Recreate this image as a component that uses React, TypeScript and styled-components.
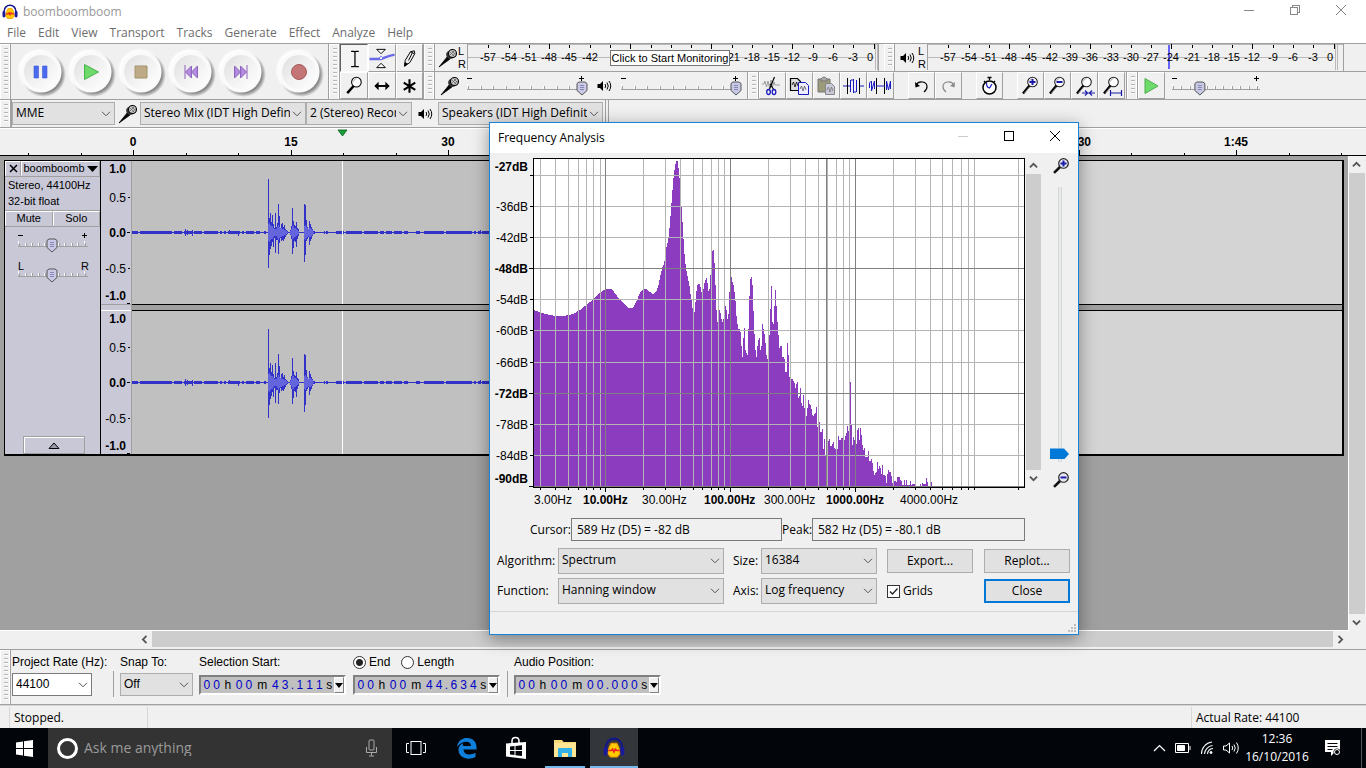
import React from "react";
import styled, { createGlobalStyle, css } from "styled-components";

const ui = `"Open Sans", "Noto Sans", sans-serif`;
const arial = `"Liberation Sans", Arial, sans-serif`;
const face = "#f0f0f0";
const edge = "#a0a0a0";
const panel = "#c8c8d7";

const GlobalStyle = createGlobalStyle`
  *, *::before, *::after { box-sizing: border-box; }
  body { margin: 0; background: ${face}; font: 12px/16px ${ui}; color: #000; }
  button, select, input { font: inherit; color: inherit; margin: 0; }
  svg { display: block; }
`;

/* ---------- shell ---------- */
const Screen = styled.div`
  min-height: 100vh;
  display: flex;
  flex-direction: column;
  position: relative;
  overflow: hidden;
  background: ${face};
`;
const TitleBar = styled.header`
  display: flex;
  align-items: center;
  height: 24px;
  padding: 0 2px;
  background: #fff;
  color: #999;
`;
const TitleText = styled.span<{ $inset?: boolean }>`
  flex: 1;
  padding-left: ${(p) => (p.$inset ? 5 : 0)}px;
`;
const WindowButton = styled.button`
  width: 46px;
  height: 24px;
  padding: 0 0 4px;
  border: 0;
  background: none;
  display: grid;
  place-items: center;
`;
const MenuBar = styled.nav`
  display: flex;
  height: 19px;
  padding: 0 0 2px 1px;
  background: #fff;
`;
const MenuItem = styled.button`
  padding: 0 6px;
  border: 0;
  background: none;
  color: #6d6d6d;
  line-height: 16px;
`;

/* ---------- toolbars ---------- */
const Docks = styled.div`
  display: flex;
  height: 57px;
  border-top: 1px solid ${edge};
`;
const DockColumn = styled.div`
  flex: 1;
  display: flex;
  flex-direction: column;
  border-bottom: 1px solid ${edge};
`;
const DockRow = styled.div`
  display: flex;
  height: 27px;
  & + & { height: 28px; border-top: 1px solid ${edge}; }
`;
const Dock = styled.div<{ $w?: number; $bottom?: boolean }>`
  display: flex;
  flex: none;
  align-self: stretch;
  position: relative;
  border-right: 1px solid ${edge};
  ${(p) => p.$w && css`width: ${p.$w}px;`}
  ${(p) => p.$bottom && css`border-bottom: 1px solid ${edge};`}
`;
const Gripper = styled.div`
  flex: none;
  width: 11px;
  border-right: 1px solid ${edge};
  box-shadow: inset 1px 1px #fff, inset -1px 0 #fff;
  background: repeating-linear-gradient(#b4b4b4 0 1px, #fff 1px 2px, ${face} 2px 4px) 4px 4px / 4px calc(100% - 8px) no-repeat;
`;
const TransportButtons = styled.div`
  display: flex;
  align-items: center;
  padding: 0 5px;
`;
const RoundButton = styled.button<{ $apart?: boolean }>`
  width: 50px;
  height: 50px;
  padding: 0;
  border: 0;
  background: none;
  margin-left: ${(p) => (p.$apart ? 8 : 0)}px;
`;
const ToolGrid = styled.div`
  display: grid;
  grid-template-columns: 28px 28px 27px;
  grid-template-rows: 28px 27px;
`;
const SquareButton = styled.button<{ $down?: boolean; $cell?: boolean }>`
  width: ${(p) => (p.$cell ? "auto" : "27px")};
  min-width: 0;
  min-height: 0;
  padding: 0;
  border: 1px solid;
  border-color: ${(p) => (p.$down ? "#606060 #fff #fff #606060" : `#fff ${edge} ${edge} #fff`)};
  background: ${(p) => (p.$down ? "#f4f4f4" : face)};
  display: flex;
  align-items: center;
  justify-content: center;
  overflow: hidden;
`;
const ToolSpace = styled.div<{ $w: number }>`flex: none; width: ${(p) => p.$w}px;`;
const MeterIcon = styled.button`
  width: 23px;
  padding: 0 0 0 2px;
  border: 0;
  background: none;
  display: grid;
  place-items: center;
`;
const Channels = styled.div`
  width: 9px;
  display: flex;
  flex-direction: column;
  justify-content: space-around;
  font: 11px/12px ${arial};
`;
const MeterScale = styled.svg`
  flex: 1;
  height: 26px;
  border-left: 1px solid ${edge};
  font: 11px ${arial};
`;
const Tooltip = styled.div`
  position: absolute;
  left: 186px;
  top: 6px;
  width: 120px;
  height: 16px;
  border: 1px solid #767676;
  background: #fff;
  font: 11px/14px ${arial};
  text-align: center;
  white-space: nowrap;
`;
const MixerIcon = styled.div<{ $w: number }>`
  flex: none;
  width: ${(p) => p.$w}px;
  display: grid;
  place-items: center;
`;
const DeviceBar = styled.div`
  display: flex;
  align-items: center;
  height: 28px;
  border-bottom: 1px solid ${edge};
`;
const DeviceEnd = styled.div`
  width: 4px;
  align-self: stretch;
  margin-left: 2px;
  border: solid ${edge};
  border-width: 0 1px;
`;

/* ---------- form controls ---------- */
const SelectBox = styled.span<{ $w: number; $h: number; $white?: boolean }>`
  position: relative;
  flex: none;
  display: block;
  width: ${(p) => p.$w}px;
  height: ${(p) => p.$h}px;
  select {
    appearance: none;
    display: block;
    width: 100%;
    height: 100%;
    padding: 0 15px 2px 3px;
    border: 1px solid ${(p) => (p.$white ? "#7a7a7a" : "#adadad")};
    border-radius: 0;
    background: ${(p) => (p.$white ? "#fff" : "#e1e1e1")};
    overflow: hidden;
    white-space: nowrap;
  }
  svg {
    position: absolute;
    right: 4px;
    top: 50%;
    margin-top: -3px;
    pointer-events: none;
  }
`;
const SliderBox = styled.span`
  position: relative;
  display: block;
  flex: none;
  input { position: absolute; inset: 0; width: 100%; height: 100%; opacity: 0; }
  svg { font: 11px ${arial}; }
`;

/* ---------- ruler and tracks ---------- */
const Ruler = styled.svg`
  width: 100%;
  height: 28px;
  border-top: 1px solid #fff;
  border-bottom: 1px solid #000;
  font: bold 12px ${arial};
`;
const Workspace = styled.main`
  flex: 1;
  display: flex;
  min-height: 0;
`;
const TrackArea = styled.div`
  flex: 1;
  min-width: 0;
  padding: 4px;
  background: ${edge};
  border-bottom: 1px solid #fff;
`;
const Track = styled.section`
  display: flex;
  border: 1px solid #000;
  border-width: 1px 2px 2px 1px;
`;
const TrackPanel = styled.div`
  width: 96px;
  display: flex;
  flex-direction: column;
  background: ${panel};
  border-right: 1px solid #000;
  font: 11px/16px ${arial};
`;
const PanelRow = styled.div`
  display: flex;
  border-bottom: 1px solid ${edge};
`;
const PanelButton = styled.button<{ $fill?: boolean }>`
  height: 15px;
  padding: 0 1px;
  ${(p) => (p.$fill ? css`flex: 1; min-width: 0;` : css`width: 16px;`)}
  display: flex;
  align-items: center;
  justify-content: center;
  gap: 2px;
  border: 1px solid;
  border-color: #fff ${edge} ${panel} #fff;
  background: ${panel};
  line-height: 13px;
  white-space: nowrap;
  svg { flex: none; }
`;
const TrackInfo = styled.div`
  height: 34px;
  padding: 0 3px;
  border-bottom: 1px solid ${edge};
`;
const PanelSliders = styled.div`
  display: flex;
  flex-direction: column;
  align-items: center;
  gap: 4px;
  padding: 2px 0 0 2px;
`;
const CollapseButton = styled.button`
  width: 62px;
  height: 18px;
  margin: auto auto 0 18px;
  padding: 0;
  display: grid;
  place-items: center;
  border: 1px solid ${edge};
  box-shadow: inset 1px 1px #fff;
  background: ${panel};
`;
const ScaleColumn = styled.div`
  width: 31px;
  display: flex;
  flex-direction: column;
  background: ${panel};
  border-right: 1px solid ${edge};
`;
const ScaleSvg = styled.svg`
  width: 30px;
  height: 143px;
  font: 12px ${arial};
`;
const ScaleGap = styled.div`
  height: 7px;
  border-top: 1px solid ${edge};
  border-bottom: 1px solid #fff;
`;
const WaveColumn = styled.div`flex: 1; min-width: 0;`;
const WaveSvg = styled.svg`width: 100%; height: 143px; background: #d4d4d4;`;
const WaveGap = styled.div`
  height: 7px;
  background: ${edge};
  border: solid #000;
  border-width: 1px 0;
`;
const VScroll = styled.div`
  width: 18px;
  padding-right: 1px;
  display: flex;
  flex-direction: column;
  border-left: 1px solid #fff;
`;
const ScrollThumb = styled.div`flex: 1; background: #cdcdcd;`;
const ScrollButton = styled.button<{ $size: number }>`
  flex: none;
  width: 15px;
  height: ${(p) => p.$size}px;
  padding: 0;
  border: 0;
  background: none;
  display: grid;
  place-items: center;
`;
const HScroll = styled.div`
  display: flex;
  height: 18px;
  padding: 0 18px 2px 137px;
`;

/* ---------- selection bar, status bar ---------- */
const SelectionBar = styled.div`
  display: flex;
  height: 56px;
  border-top: 1px solid ${edge};
  border-bottom: 1px solid ${edge};
`;
const Field = styled.div<{ $w: number }>`
  flex: none;
  width: ${(p) => p.$w}px;
  padding-top: 4px;
  font: 12px/16px ${arial};
  white-space: nowrap;
`;
const FieldHead = styled.div`
  display: flex;
  align-items: center;
  height: 16px;
  margin-bottom: 3px;
`;
const Divider = styled.div`
  width: 1px;
  height: 26px;
  margin: 21px 6px 0 0;
  background: ${edge};
`;
const Radio = styled.input`
  appearance: none;
  width: 13px;
  height: 13px;
  margin: 0 3px 0 0;
  border: 1px solid #333;
  border-radius: 50%;
  background: #fff;
  &:checked { background: radial-gradient(circle, #222 0 3px, #fff 4px); }
`;
const RadioLabel = styled.label`
  display: flex;
  align-items: center;
  margin-right: 11px;
`;
const TimeBox = styled.div`
  display: flex;
  width: 147px;
  height: 20px;
  margin-top: 5px;
  padding-left: 1px;
  border: 2px solid;
  border-color: #808080 #fff #fff #808080;
  background: #c0c0c0;
  line-height: 16px;
`;
const TimeCell = styled.span<{ $w: number; $unit?: boolean }>`
  width: ${(p) => p.$w}px;
  text-align: center;
  color: ${(p) => (p.$unit ? "#000" : "#0000c8")};
`;
const TimeDrop = styled.button`
  width: 10px;
  margin-left: auto;
  padding: 0;
  display: grid;
  place-items: center;
  border: 1px solid;
  border-color: #fff #808080 #808080 #fff;
  background: ${face};
`;
const StatusBar = styled.footer`
  display: flex;
  height: 23px;
  padding-left: 9px;
  border-top: 1px solid #d7d7d7;
`;
const StatusCell = styled.div<{ $w?: number }>`
  ${(p) => (p.$w ? css`width: ${p.$w}px;` : css`flex: 1;`)}
  margin-top: 1px;
  padding: 3px 0 0 4px;
  border-left: 1px solid #d7d7d7;
`;

/* ---------- taskbar ---------- */
const Taskbar = styled.div`
  display: flex;
  height: 40px;
  background: #02060b;
  color: #fff;
`;
const TaskButton = styled.button<{ $w: number; $run?: boolean; $on?: boolean }>`
  flex: none;
  width: ${(p) => p.$w}px;
  padding: 0;
  border: 0;
  display: grid;
  place-items: center;
  background: ${(p) => (p.$on ? "#33373c" : "none")};
  color: #fff;
  ${(p) => p.$run && css`box-shadow: inset 0 -2px #76b9ed;`}
`;
const SearchBox = styled.label`
  flex: none;
  width: 344px;
  display: flex;
  align-items: center;
  gap: 5px;
  padding: 0 14px 0 8px;
  background: #333;
`;
const SearchInput = styled.input`
  flex: 1;
  min-width: 0;
  padding: 0;
  border: 0;
  background: none;
  font-size: 14px;
  &::placeholder { color: #9a9a9a; opacity: 1; }
`;
const Tray = styled.div`
  display: flex;
  align-items: center;
  margin-left: auto;
`;
const TrayButton = styled.button<{ $w: number }>`
  width: ${(p) => p.$w}px;
  height: 40px;
  padding: 0;
  border: 0;
  display: grid;
  place-items: center;
  background: none;
  color: #fff;
`;
const NotifyButton = styled(TrayButton)`padding-right: 6px;`;
const Clock = styled.div`
  width: 68px;
  text-align: center;
  line-height: 18px;
`;
const ShowDesktop = styled.div`
  width: 5px;
  height: 40px;
  border-left: 1px solid #555;
`;

/* ---------- frequency analysis window ---------- */
const Dialog = styled.section`
  position: absolute;
  left: 489px;
  top: 122px;
  width: 590px;
  border: 1px solid #1883d7;
  background: ${face};
  box-shadow: 0 4px 16px rgba(0, 0, 0, 0.4);
`;
const DialogTitle = styled.header`
  display: flex;
  align-items: center;
  height: 30px;
  padding-left: 8px;
  background: #fff;
`;
const PlotRow = styled.div`
  display: flex;
  height: 357px;
`;
const PlotSvg = styled.svg`
  flex: none;
  width: 536px;
  height: 357px;
  font: 12px ${arial};
`;
const PlotScroll = styled.div`
  width: 15px;
  height: 334px;
  padding-top: 4px;
  display: flex;
  flex-direction: column;
`;
const ZoomColumn = styled.div`
  width: 37px;
  height: 336px;
  padding: 4px 0 0 2px;
  display: flex;
  flex-direction: column;
  align-items: center;
`;
const VRange = styled.input`
  appearance: none;
  writing-mode: vertical-lr;
  direction: rtl;
  width: 20px;
  height: 276px;
  margin: 12px 2px 9px 0;
  background: linear-gradient(90deg, #d6d6d6 1px, #e7eaea 1px 3px, #d6d6d6 3px) center / 4px 100% no-repeat;
  &::-webkit-slider-thumb {
    appearance: none;
    width: 19px;
    height: 11px;
    background: #0078d7;
    clip-path: polygon(0 0, 74% 0, 100% 50%, 74% 100%, 0 100%);
  }
`;
const Readouts = styled.div`
  display: flex;
  align-items: center;
  padding: 8px 0 7px 40px;
`;
const ReadLabel = styled.label<{ $w: number }>`
  flex: none;
  width: ${(p) => p.$w}px;
`;
const Readout = styled.input<{ $w: number }>`
  width: ${(p) => p.$w}px;
  height: 23px;
  padding: 0 5px 1px;
  border: 1px solid #7a7a7a;
  background: ${face};
`;
const FormGrid = styled.div`
  display: grid;
  grid-template-columns: 61px 166px 37px 126px 97px 86px;
  row-gap: 4px;
  align-items: center;
  padding: 0 0 7px 7px;
`;
const FormLabel = styled.label<{ $indent?: boolean }>`
  padding-left: ${(p) => (p.$indent ? 9 : 0)}px;
`;
const PushButton = styled.button<{ $primary?: boolean }>`
  width: 86px;
  height: 24px;
  padding: 0;
  border: ${(p) => (p.$primary ? "2px solid #0078d7" : "1px solid #adadad")};
  background: #e1e1e1;
`;
const CheckLabel = styled.label`
  display: flex;
  align-items: center;
  gap: 3px;
  position: relative;
  svg { position: absolute; left: 1px; pointer-events: none; }
`;
const CheckBox = styled.input`
  appearance: none;
  width: 13px;
  height: 13px;
  border: 1px solid #333;
  background: #fff;
`;
const DialogStatus = styled.div`
  display: flex;
  align-items: flex-end;
  justify-content: flex-end;
  height: 23px;
  padding: 0 2px 2px 0;
  border-top: 1px solid #d7d7d7;
`;

/* ---------- icons ---------- */
const Chevron = ({ dir = "down", color = "#555", size = 10, weight = 1 }: { dir?: string; color?: string; size?: number; weight?: number }) => {
  const turn: Record<string, number> = { down: 0, up: 180, left: 90, right: -90 };
  return (
    <svg width={size} height={size === 10 ? 6 : size} viewBox={size === 10 ? "0 0 10 6" : "0 -2 10 10"}>
      <path d="M1 .8 5 4.8 9 .8" fill="none" stroke={color} strokeWidth={weight} transform={`rotate(${turn[dir]} 5 3)`} />
    </svg>
  );
};
const Logo = ({ size = 16 }: { size?: number }) => (
  <svg width={size} height={size} viewBox="0 0 16 16">
    <path d="M2.2 9V7a5.8 5.8 0 0 1 11.6 0v2" fill="none" stroke="#15158a" strokeWidth="1.5" />
    <path d="M4.500 7.500 6 4.500h4l1.500 3 .8 4.500-2 2.500H5.500l-2-2.500z" fill="#fc0" stroke="#f59a00" strokeWidth=".8" />
    <path d="M4 9.800h2l1-1 1 2 1-2 1 1h2" stroke="#e22" strokeWidth="1.200" fill="none" />
    <rect x=".5" y="7" width="2.800" height="6.500" rx="1.400" fill="#1a1a9c" />
    <rect x="12.700" y="7" width="2.800" height="6.500" rx="1.400" fill="#1a1a9c" />
  </svg>
);
const Mic = () => (
  <svg width="20" height="20" viewBox="0 0 20 20">
    <path d="M1 19 9.500 8.500l2.500 2.500z" fill="#000" stroke="#000" strokeWidth=".8" />
    <path d="M8.500 8.500a6 5 0 0 1 3-6l5.500 5.500a6 5 0 0 1-6 3z" fill="#333" />
    <circle cx="14.500" cy="5.500" r="4" fill="#ccc" stroke="#000" strokeWidth="1.100" />
    <path d="m12 4 4 4M13.500 2.500l4 4M12 7l4.500-4.500M14 8.500 17.500 5" stroke="#555" strokeWidth=".7" />
  </svg>
);
const Speaker = ({ color = "#000" }: { color?: string }) => (
  <svg width="15" height="14" viewBox="0 0 15 14">
    <path d="M.5 5v4h2.500L6 12V2L3 5z" fill={color} />
    <path d="M8 5q1.500 2 0 4M10 3.500q2.500 3.500 0 7M12 2q3.500 5 0 10" fill="none" stroke={color} />
  </svg>
);
const TransportGlyph = ({ kind }: { kind: string }) => {
  switch (kind) {
    case "Pause":
      return <path d="M18 19h4.500v12H18zM26.500 19H31v12h-4.500z" fill="#4a6cf0" stroke="#3d58d8" strokeWidth=".6" />;
    case "Play":
      return <path d="M18.500 17.500v15L32.500 25z" fill="#6ddb6a" stroke="#4fae4d" />;
    case "Stop":
      return <path d="M19 19h12v12H19z" fill="#bcab86" stroke="#a3946f" />;
    case "Skip to Start":
      return <path d="M19 18v14M25.500 19v12L19.500 25zM31.500 19v12L25.500 25z" fill="#b18ade" stroke="#8f62bd" />;
    case "Skip to End":
      return <path d="M31 18v14M18.500 19v12l6-6zM24.500 19v12l6-6z" fill="#b18ade" stroke="#8f62bd" />;
    default:
      return <circle cx="25" cy="25" r="7.500" fill="#c47575" stroke="#a55c5c" />;
  }
};
const Round = ({ kind }: { kind: string }) => (
  <RoundButton aria-label={kind} $apart={kind === "Record"}>
    <svg width="50" height="50" viewBox="0 0 50 50">
      <defs>
        <linearGradient id="dome" x1="0" y1="0" x2="1" y2="1">
          <stop offset="0" stopColor="#dedede" />
          <stop offset=".5" stopColor="#f1f1f1" />
          <stop offset="1" stopColor="#fff" />
        </linearGradient>
        <radialGradient id="drop">
          <stop offset=".82" stopColor="#8c8c8c" />
          <stop offset="1" stopColor="#8c8c8c" stopOpacity="0" />
        </radialGradient>
        <radialGradient id="shine">
          <stop offset=".85" stopColor="#fff" />
          <stop offset="1" stopColor="#fff" stopOpacity="0" />
        </radialGradient>
      </defs>
      <circle cx="27.500" cy="27.500" r="22.500" fill="url(#drop)" />
      <circle cx="23.500" cy="23.500" r="22.500" fill="url(#shine)" />
      <circle cx="25" cy="25" r="20.500" fill="#fafafa" />
      <circle cx="25" cy="25" r="17" fill="url(#dome)" />
      <TransportGlyph kind={kind} />
    </svg>
  </RoundButton>
);
const Magnifier = ({ sign }: { sign?: string }) => (
  <svg width="23" height="23" viewBox="0 0 23 23">
    <path d="m4 19.500 6.500-8" stroke="#000" strokeWidth="2.400" />
    <path d="m5.500 19 5-6" stroke="#999" strokeWidth=".8" />
    <circle cx="13.500" cy="8" r="4.800" fill="#fff" stroke="#222" strokeWidth="1.100" />
    <path d="M10.500 7.500a3.500 3.500 0 0 1 3-3" stroke="#aaa" fill="none" />
    {sign === "plus" && <path d="M10.500 8h6M13.500 5v6" stroke="#1a1aa8" strokeWidth="2" />}
    {sign === "minus" && <path d="M10.500 8h6" stroke="#1a1aa8" strokeWidth="2" />}
    {sign === "sel" && <path d="M9 19h13M12 16.500 14.500 19 12 21.500M19 16.500 16.500 19l2.500 2.500" stroke="#1a1aa8" strokeWidth="1.200" fill="none" />}
    {sign === "fit" && <path d="M10.500 19h11M10.500 16v6M21.500 16v6" stroke="#1a1aa8" strokeWidth="1.200" fill="none" />}
  </svg>
);
const SmallLens = ({ sign }: { sign: string }) => (
  <svg width="18" height="18" viewBox="0 0 18 18">
    <path d="m2 16 6-6" stroke="#111" strokeWidth="2.600" />
    <circle cx="11.500" cy="6.500" r="4.800" fill="#e8e8f4" stroke="#222" strokeWidth="1.200" />
    <path d={sign === "plus" ? "M8.500 6.500h6M11.500 3.500v6" : "M8.500 6.500h6"} stroke="#1a1aa8" strokeWidth="2" />
  </svg>
);
const ToolGlyph = ({ kind }: { kind: string }) => {
  const p = { width: 26, height: 25, viewBox: "0 0 26 26", fill: "none", stroke: "#000" };
  switch (kind) {
    case "Selection Tool":
      return <svg {...p}><path d="M10 5.500h3l1 1 1-1h3M14 6v15M10 21.500h3l1-1 1 1h3" strokeWidth="1.300" /></svg>;
    case "Envelope Tool":
      return (
        <svg {...p}>
          <path d="M0 13.500h12l8-3 6-1.500" stroke="#6a6ae6" strokeWidth="2.500" />
          <path d="M7.500 3.500h9L12 8zM7.500 22.500h9L12 18z" fill="#fff" />
          <path d="M12 10.500 14 12.500 12 14.500 10 12.500z" fill="#fff" stroke="#6a6ae6" />
        </svg>
      );
    case "Draw Tool":
      return (
        <svg {...p}>
          <path d="m8 21 .5-6L14 6l4-1 .5 3-5 9z" fill="#eee" />
          <path d="m8 21 .3-3.500 2.500 1z" fill="#000" />
          <path d="m12 15 4-8M14 6l4 2" />
        </svg>
      );
    case "Zoom Tool":
      return (
        <svg {...p}>
          <path d="m6 21 7-8" strokeWidth="2.600" />
          <circle cx="15.500" cy="9.500" r="5" fill="#fff" strokeWidth="1.100" />
          <path d="M12.500 9a3.500 3.500 0 0 1 3-3" stroke="#aaa" />
        </svg>
      );
    case "Time Shift Tool":
      return <svg {...p}><path d="M6 13.500h14" strokeWidth="2" /><path d="m9.500 9-4.500 4.500L9.500 18zM16.500 9l4.500 4.500-4.500 4.500z" fill="#000" stroke="none" /></svg>;
    default:
      return <svg {...p}><path d="M13 6.500v14M7 10l12 7.500M19 10 7 17.500" strokeWidth="2.200" /></svg>;
  }
};
const wavy = "M1 9h2l1-3 1.500 6L7 6l1.500 7L10 5l1.500 7L13 7l1 3h5";
const EditGlyph = ({ kind }: { kind: string }) => {
  const p = { width: 23, height: 22, viewBox: "0 0 23 22", fill: "none", stroke: "#000" };
  switch (kind) {
    case "Cut":
      return (
        <svg {...p}>
          <path d={wavy} stroke="#888" strokeWidth=".8" />
          <path d="M13.500 2 8.500 14M9 9l4 6" strokeWidth="1.200" />
          <g stroke="#1a1ac0" strokeWidth="1.300"><ellipse cx="7.500" cy="17" rx="1.800" ry="2.500" /><ellipse cx="13" cy="17" rx="1.800" ry="2.500" /></g>
        </svg>
      );
    case "Copy":
      return (
        <svg {...p}>
          <path d="M2.500 3.500h7l3 3v9h-10z" fill="#ddd" strokeWidth="1.200" />
          <path d="m4 10 1.500-3L7 12l1.500-5L10 11" strokeWidth=".8" />
          <path d="M10.500 7.500h7l3 3v9h-10z" fill="#eef" stroke="#1a1ac0" />
          <path d="m12 14 1.500-3L15 16l1.500-5 1.500 4" stroke="#555" strokeWidth=".8" />
        </svg>
      );
    case "Paste":
      return (
        <svg {...p}>
          <path d="M3 4h12v13H3z" fill="#9b9b7a" stroke="#777" />
          <path d="M6 4q3-4 6 0v2H6z" fill="#aaa" stroke="#777" />
          <path d="M10.500 8.500h6l3 3v8h-9z" fill="#c8c8d8" stroke="#888" />
          <path d="m12 15 1.500-3L15 17l1.500-5 1.500 4" stroke="#777" strokeWidth=".8" />
        </svg>
      );
    case "Trim":
      return <svg {...p}><path d="M1 11h5M17 11h5" stroke="#1a1ac0" /><path d="M8.500 5v12M11.500 4v14M14.500 5v12M6 11h2M9 5h2M12 17h2" stroke="#1a1ac0" /><path d="M5.500 3v16M17.500 3v16" /></svg>;
    case "Silence":
      return <svg {...p}><path d="M.5 13V8L2.500 6v10L5.500 6v8M17.500 15V6l2 9 2-9v8" stroke="#1a1ac0" /><path d="M7.500 3v16M15.500 3v16" /><path d="M7 11h9" stroke="#1a1ac0" /></svg>;
    case "Undo":
      return <svg {...p}><path d="M6 10c3-5 11-3.500 11 1.500 0 3-1 4-3 5.500" strokeWidth="1.200" /><path d="m5 7 .5 5.500L10 11z" fill="#000" stroke="none" /></svg>;
    case "Redo":
      return <svg {...p} stroke="#8a8a8a"><path d="M17 10C14 5 6 6.500 6 11.500c0 3 1 4 3 5.500" strokeWidth="1.200" /><path d="m18 7-.5 5.500L13 11z" fill="#8a8a8a" stroke="none" /></svg>;
    case "Sync-Lock":
      return (
        <svg {...p}>
          <circle cx="11.500" cy="12.500" r="6.500" fill="#fff" strokeWidth="1.500" />
          <path d="M11.500 2v3M9.500 2.500h4M6 6l1.500 1.500M17 6l-1.500 1.500" strokeWidth="1.300" />
          <path d="M8.500 8q0 4.500 3 5L14 9" stroke="#1a1ac0" strokeWidth="1.200" />
        </svg>
      );
    default:
      return <svg {...p}><path d="M5 3.500v15L18 11z" fill="#6ddb6a" stroke="#4fae4d" /></svg>;
  }
};

/* ---------- data driven parts ---------- */
type Choice = { label: string; text: string; w: number; h: number; white?: boolean; id?: string };
const Select = ({ label, text, w, h, white, id }: Choice) => (
  <SelectBox $w={w} $h={h} $white={white}>
    <select aria-label={label} id={id} defaultValue={text}><option>{text}</option></select>
    <Chevron />
  </SelectBox>
);

type SliderProps = { label: string; w: number; value: number; ticks?: number; ends?: [string, string] };
const Slider = ({ label, w, value, ticks = 11, ends = ["-", "+"] }: SliderProps) => {
  const last = w - 8;
  const x = 4 + (last - 4) * value;
  return (
    <SliderBox>
      <svg width={w} height="26" viewBox={`0 0 ${w} 26`} shapeRendering="crispEdges">
        {ends[0] === "-" ? <path d="M3 6.500h5" stroke="#000" /> : <text x="3" y="11">{ends[0]}</text>}
        {ends[1] === "+" ? <path d={`M${last - 3} 6.500h5M${last - 0.5} 4v5`} stroke="#000" /> : <text x={last - 4} y="11">{ends[1]}</text>}
        <path d={`M3 17.500h${w - 8}`} stroke={edge} />
        {Array.from({ length: ticks }, (_, i) => {
          const tx = Math.round(3 + ((last - 4) * i) / (ticks - 1)) + 0.5;
          const tall = i === 0 || i === ticks - 1;
          return (
            <g key={i}>
              <path d={`M${tx} ${tall ? 12 : 14}v3`} stroke="#fff" />
              <path d={`M${tx + 1} 14v3`} stroke={edge} />
            </g>
          );
        })}
        <g shapeRendering="auto">
          <path d={`M${x - 5} 11.500l2-1.500h6l2 1.500v7l-5 4.500-5-4.500z`} fill="#c9c9e6" stroke="#555" />
          <path d={`M${x - 2} 13.500h4M${x - 2} 15.500h4M${x - 2} 17.500h4`} stroke="#77a" strokeWidth=".8" />
        </g>
      </svg>
      <input type="range" aria-label={label} defaultValue={value * 100} />
    </SliderBox>
  );
};

const dbSteps = Array.from({ length: 20 }, (_, i) => -57 + i * 3);
/* covered: range of levels hidden behind the monitoring hint */
const Scale = ({ peak, covered }: { peak?: number; covered?: [number, number] }) => (
  <MeterScale shapeRendering="crispEdges">
    <path d="M0 .5h1000" stroke="#b8b8b8" />
    <path d="M0 13.500h406" stroke="#b8b8b8" />
    <path d="M407.500 1v25M409.500 1v25" stroke="#b8b8b8" />
    {peak && <path d={`M${peak} 1v24`} stroke="#6464ff" strokeWidth="2" />}
    {dbSteps.map((db) => {
      const x = Math.round((db + 60) * 6.76);
      const long = db % 12 === 0;
      const hidden = covered && db >= covered[0] && db <= covered[1];
      return (
        <g key={db}>
          <path d={`M${x + 0.5} ${long ? 0 : 1}v${long ? 5 : 3}`} stroke="#000" />
          {!hidden && <text x={db === 0 ? x - 4 : x} y="17" textAnchor="middle">{db}</text>}
        </g>
      );
    })}
  </MeterScale>
);

const noise = (i: number) => {
  const v = Math.sin(i * 127.1 + 11.7) * 43758.5453;
  return v - Math.floor(v);
};
/* [offset from clip start, height above the axis, depth below, loud core above and below] */
const bursts: [number, number, number, number][] = [
  [136, 53, 35, 8], [137, 14, 22, 9], [138, 19, 16, 7], [139, 10, 13, 6], [140, 17, 9, 6], [141, 8, 14, 4],
  [142, 4, 5, 3], [143, 19, 20, 3], [144, 5, 7, 3], [145, 9, 7, 5], [146, 28, 21, 7], [147, 16, 10, 5], [148, 4, 5, 4],
  [149, 8, 8, 4], [150, 9, 7, 3], [151, 5, 8, 3], [152, 7, 6, 2], [153, 3, 4, 2], [154, 2, 2, 1], [155, 1, 1, 0],
  [158, 2, 2, 1], [159, 6, 6, 3], [160, 24, 21, 6], [161, 11, 15, 6], [162, 7, 8, 4], [163, 6, 9, 4], [164, 10, 14, 3],
  [165, 4, 6, 2], [166, 3, 3, 1], [172, 28, 29, 6], [173, 27, 22, 7], [174, 12, 8, 5], [175, 5, 6, 4], [176, 3, 4, 3],
  [177, 11, 12, 4], [178, 8, 8, 4], [179, 5, 6, 3], [180, 3, 3, 2], [181, 1, 1, 0],
];
const quiet = Array.from({ length: 800 }, (_, i) => i).filter(
  (i) => !(i > 135 && i < 182) && !(i > 182 && i < 192) && noise(i >> 1) > (i > 192 && i < 210 ? 0.5 : 0.2)
);
const Waveform = () => (
  <WaveSvg shapeRendering="crispEdges">
    <rect width="860" height="143" fill="#c0c0c0" />
    <path d="M0 71.500h840" stroke="#3232c8" />
    <path d={quiet.map((i) => `M${i + 0.5} 70v3`).join("") + "M53.500 68v7M55.500 69v5M60.500 69v6M97.500 69v4M106.500 70v5M348.500 69v4"} stroke="#3232c8" />
    <path d={bursts.map(([x, u, d]) => `M${x + 0.5} ${71 - u}v${u + d + 1}`).join("")} stroke="#3232c8" />
    <path d={bursts.map(([x, , , c]) => `M${x + 0.5} ${71 - c}v${c * 2 + 1}`).join("")} stroke="#6464dc" />
    <path d="M210.500 0v143" stroke="#fff" />
  </WaveSvg>
);
const AmplitudeScale = () => (
  <ScaleSvg textAnchor="end">
    <text x="25" y="12" fontWeight="bold">1.0</text>
    <text x="25" y="41">0.5</text>
    <text x="25" y="76" fontWeight="bold">0.0</text>
    <text x="25" y="112">-0.5</text>
    <text x="25" y="139" fontWeight="bold">-1.0</text>
    <path d="M27 36.500h2M26 71.500h3M27 107.500h2M26 142.500h3" stroke="#000" />
  </ScaleSvg>
);

const minutes = ["0", "15", "30", "45", "1:00", "1:15", "1:30", "1:45"];
const Timeline = () => (
  <Ruler shapeRendering="crispEdges">
    {Array.from({ length: 26 }, (_, i) => {
      const x = Math.round(28 + i * 52.53) + 0.5;
      return <path key={i} d={i % 3 === 2 ? `M${x} 21v5` : `M${x} 24v2`} stroke="#000" />;
    })}
    {minutes.map((t, i) => (
      <text key={t} x={Math.round(133 + i * 157.6)} y="17" textAnchor="middle">{t}</text>
    ))}
    <path d="M338 1h9l-4.500 6z" fill="#17a03a" stroke="#0b5a1c" strokeWidth=".8" shapeRendering="auto" />
  </Ruler>
);

/* smooth low-frequency curve and stepped bins, in plot pixels */
const curve = "534,310 539,312 545,314 550,315 556,316 563,316 569,315 575,313 580,310 585,306 590,302 595,297 600,293 604,290 608,289 611,289 614,292 617,296 621,301 625,305 629,308 632,308 634,306 637,300 640,293 643,289 646,289 650,292 653,294 655,293 657,290 659,283 661,273 663,265";
const bins = "664,261 665,254 666,247 667,243 668,237 669,228 670,216 671,203 672,190 673,178 674,170 675,164 676,161 678,168 679,178 681,207 682,222 683,239 684,254 685,264 686,271 687,276 688,281 689,286 690,294 691,300 692,308 693,320 694,312 695,302 696,291 697,285 698,284 700,287 701,292 702,300 703,289 704,283 705,280 706,278 707,283 708,291 709,289 710,275 711,262 712,251 713,250 714,263 715,285 716,310 717,322 718,310 720,313 721,319 722,322 723,319 725,306 726,310 727,319 728,314 729,292 730,277 732,282 733,285 734,292 735,301 736,316 737,324 738,329 740,332 741,346 742,357 743,338 744,328 745,350 746,353 747,355 748,329 749,296 750,279 751,277 752,285 753,311 754,334 755,350 756,357 757,346 758,340 759,338 760,350 761,346 762,324 763,329 764,334 765,343 766,355 767,359 769,335 770,309 771,286 772,322 773,324 774,306 775,290 776,306 777,322 778,335 779,348 780,346 782,357 784,359 785,372 787,343 788,355 789,377 791,379 793,381 794,383 795,388 796,384 797,382 798,398 799,396 800,388 801,403 802,406 803,395 804,408 806,416 807,408 808,400 809,404 810,405 811,409 812,415 813,416 814,414 815,413 816,407 817,427 819,422 820,432 822,429 823,449 824,439 825,455 828,441 829,439 830,446 832,444 833,442 834,448 835,449 838,436 839,440 841,438 844,440 845,436 846,433 847,426 848,431 850,382 851,425 852,445 853,437 854,440 856,444 857,430 858,428 859,440 860,428 861,435 862,445 863,450 864,448 865,457 868,451 869,461 871,459 872,463 873,471 874,475 875,473 876,472 877,462 878,469 879,466 880,468 881,474 882,465 883,475 885,476 886,483 887,474 888,470 889,472 891,476 892,483 894,481 896,482 897,477 900,480 901,481 902,485 904,480 905,485 906,480 907,485 910,481 911,485 912,484 915,487 920,484 921,486 922,483 923,484 926,478 927,482 928,487 931,482 932,487"
  .split(" ")
  .map((s) => s.split(",").map(Number));
const spectrum = `M534,487 L${curve.split(" ").join(" L")} ${bins.map(([x, y]) => `H${x} V${y}`).join(" ")} Z`;
const dbAxis: [string, number, number][] = [
  ["-27dB", 175, 166], ["-36dB", 206, 206], ["-42dB", 237, 237], ["-48dB", 268, 268], ["-54dB", 299, 299], ["-60dB", 330, 330],
  ["-66dB", 362, 362], ["-72dB", 393, 393], ["-78dB", 424, 424], ["-84dB", 455, 455], ["-90dB", 486, 478],
];
const boldDb = ["-27dB", "-48dB", "-72dB", "-90dB"];
const decades = [605, 730, 855];
const minorHz = [540, 555, 568, 578, 586, 593, 600, 643, 665, 680, 693, 702, 711, 718, 724, 768, 790, 805, 818, 827, 836, 843, 849, 893, 915, 930, 942, 952, 961, 968, 974, 1018];
const hzAxis: [string, number][] = [["3.00Hz", 534], ["10.00Hz", 583], ["30.00Hz", 642], ["100.00Hz", 704], ["300.00Hz", 764], ["1000.00Hz", 826], ["4000.00Hz", 900]];

const Plot = () => (
  <PlotSvg viewBox="490 153 536 357" shapeRendering="crispEdges" role="img" aria-label="Spectrum">
    <rect x="534" y="159" width="490" height="328" fill="#fff" />
    <path d={spectrum} fill="#8c3cbe" />
    {minorHz.map((x) => <path key={x} d={`M${x + 0.5} 159V487`} stroke="#b4b4b4" />)}
    {dbAxis.map(([t, y]) => (
      <path key={t} d={`M534 ${y + 0.5}H1024`} stroke={["-48dB", "-72dB", "-90dB"].includes(t) ? "#808080" : "#b4b4b4"} />
    ))}
    {decades.map((x) => <path key={x} d={`M${x + 0.5} 159V487`} stroke="#808080" />)}
    <path d="M826.500 159V487" stroke="#808080" />
    <rect x="533.500" y="158.500" width="491" height="329" fill="none" stroke="#000" />
    {dbAxis.map(([t, y, ly]) => (
      <g key={t}>
        <path d={`M${boldDb.includes(t) && t !== "-27dB" ? 529 : 530} ${y + 0.5}H533`} stroke="#000" />
        <text x="528" y={ly + 5} textAnchor="end" fontWeight={boldDb.includes(t) ? "bold" : "normal"}>{t}</text>
      </g>
    ))}
    {minorHz.map((x) => <path key={x} d={`M${x + 0.5} 488v2`} stroke="#000" />)}
    {decades.map((x) => <path key={x} d={`M${x + 0.5} 488v4`} stroke="#000" />)}
    {hzAxis.map(([t, x]) => (
      <text key={t} x={x} y="504" fontWeight={t.startsWith("10") ? "bold" : "normal"}>{t}</text>
    ))}
  </PlotSvg>
);

const WinGlyph = ({ kind, color }: { kind: string; color: string }) => (
  <svg width="12" height="12" viewBox="0 0 12 12" fill="none" stroke={color} shapeRendering={kind === "Close" ? "auto" : "crispEdges"}>
    {kind === "Minimize" && <path d="M1 6.500h10" />}
    {kind === "Maximize" && <path d="M1.500 1.500h9v9h-9z" />}
    {kind === "Restore" && <path d="M1.500 3.500h7v7h-7zM3.500 3.500v-2h7v7h-2" />}
    {kind === "Close" && <path d="m1 1 10 10M11 1 1 11" />}
  </svg>
);

const timeWidths: Record<string, number> = { h: 13, m: 17, ".": 5, s: 10 };
const TimeControl = ({ label, value }: { label: string; value: string }) => (
  <TimeBox role="group" aria-label={label}>
    {value.split("").map((c, i) => (
      <TimeCell key={i} $w={timeWidths[c] ?? 10} $unit={/[hms]/.test(c)}>{c}</TimeCell>
    ))}
    <TimeDrop aria-label={`${label} format`}>
      <svg width="8" height="5"><path d="M0 0h8L4 5z" /></svg>
    </TimeDrop>
  </TimeBox>
);

const FrequencyWindow = () => (
  <Dialog role="dialog" aria-label="Frequency Analysis">
    <DialogTitle>
      <TitleText>Frequency Analysis</TitleText>
      <WindowButton aria-label="Minimize"><WinGlyph kind="Minimize" color="#ccc" /></WindowButton>
      <WindowButton aria-label="Maximize"><WinGlyph kind="Maximize" color="#000" /></WindowButton>
      <WindowButton aria-label="Close"><WinGlyph kind="Close" color="#000" /></WindowButton>
    </DialogTitle>
    <PlotRow>
      <Plot />
      <PlotScroll>
        <ScrollButton $size={17} aria-label="Scroll up"><Chevron dir="up" weight={2} size={9} /></ScrollButton>
        <ScrollThumb />
        <ScrollButton $size={17} aria-label="Scroll down"><Chevron weight={2} size={9} /></ScrollButton>
      </PlotScroll>
      <ZoomColumn>
        <SmallLens sign="plus" />
        <VRange type="range" aria-label="Zoom" defaultValue={1} />
        <SmallLens sign="minus" />
      </ZoomColumn>
    </PlotRow>
    <Readouts>
      <ReadLabel $w={41} htmlFor="cursor">Cursor:</ReadLabel>
      <Readout $w={211} id="cursor" readOnly value="589 Hz (D5) = -82 dB" />
      <ReadLabel $w={30} htmlFor="peak">Peak:</ReadLabel>
      <Readout $w={213} id="peak" readOnly value="582 Hz (D5) = -80.1 dB" />
    </Readouts>
    <FormGrid>
      <FormLabel htmlFor="algorithm">Algorithm:</FormLabel>
      <Select id="algorithm" label="Algorithm" text="Spectrum" w={166} h={26} />
      <FormLabel $indent htmlFor="size">Size:</FormLabel>
      <Select id="size" label="Size" text="16384" w={116} h={26} />
      <PushButton>Export...</PushButton>
      <PushButton>Replot...</PushButton>
      <FormLabel htmlFor="function">Function:</FormLabel>
      <Select id="function" label="Function" text="Hanning window" w={166} h={26} />
      <FormLabel $indent htmlFor="axis">Axis:</FormLabel>
      <Select id="axis" label="Axis" text="Log frequency" w={116} h={26} />
      <CheckLabel>
        <CheckBox type="checkbox" defaultChecked />
        <svg width="11" height="11"><path d="m2 5.500 2.500 2.500L9.500 2.500" fill="none" stroke="#222" strokeWidth="1.300" /></svg>
        Grids
      </CheckLabel>
      <PushButton $primary>Close</PushButton>
    </FormGrid>
    <DialogStatus>
      <svg width="8" height="8" fill="#bfbfbf"><path d="M6 0h2v2H6zM3 3h2v2H3zM6 3h2v2H6zM0 6h2v2H0zM3 6h2v2H3zM6 6h2v2H6z" /></svg>
    </DialogStatus>
  </Dialog>
);

const menus = ["File", "Edit", "View", "Transport", "Tracks", "Generate", "Effect", "Analyze", "Help"];
const transport = ["Pause", "Play", "Stop", "Skip to Start", "Skip to End", "Record"];
const tools = ["Selection Tool", "Envelope Tool", "Draw Tool", "Zoom Tool", "Time Shift Tool", "Multi-Tool"];

export default function App() {
  return (
    <Screen>
      <GlobalStyle />
      <TitleBar>
        <Logo />
        <TitleText $inset>boomboomboom</TitleText>
        {["Minimize", "Restore", "Close"].map((k) => (
          <WindowButton key={k} aria-label={k}><WinGlyph kind={k} color="#888" /></WindowButton>
        ))}
      </TitleBar>
      <MenuBar>{menus.map((m) => <MenuItem key={m}>{m}</MenuItem>)}</MenuBar>

      <Docks>
        <Dock $w={329} $bottom>
          <Gripper />
          <TransportButtons>{transport.map((k) => <Round key={k} kind={k} />)}</TransportButtons>
        </Dock>
        <Dock $bottom>
          <Gripper />
          <ToolGrid>
            {tools.map((t, i) => (
              <SquareButton key={t} $cell $down={i === 0} aria-label={t}><ToolGlyph kind={t} /></SquareButton>
            ))}
          </ToolGrid>
        </Dock>
        <DockColumn>
          <DockRow>
            <Dock $w={455}>
              <Gripper />
              <MeterIcon aria-label="Recording meter"><Mic /></MeterIcon>
              <Channels><span>L</span><span>R</span></Channels>
              <Scale covered={[-39, -24]} />
              <Tooltip role="tooltip">Click to Start Monitoring</Tooltip>
            </Dock>
            <ToolSpace $w={5} />
            <Dock $w={460}>
              <Gripper />
              <MeterIcon aria-label="Playback meter"><Speaker /></MeterIcon>
              <Channels><span>L</span><span>R</span></Channels>
              <Scale peak={241} />
            </Dock>
          </DockRow>
          <DockRow>
            <Dock $w={324}>
              <Gripper />
              <MixerIcon $w={29}><Mic /></MixerIcon>
              <Slider label="Recording volume" w={126} value={1} ticks={10} />
              <MixerIcon $w={28}><Speaker /></MixerIcon>
              <Slider label="Playback volume" w={126} value={1} ticks={10} />
            </Dock>
            <Dock $w={379}>
              <Gripper />
              {["Cut", "Copy", "Paste", "Trim", "Silence"].map((k) => <SquareButton key={k} aria-label={k}><EditGlyph kind={k} /></SquareButton>)}
              <ToolSpace $w={14} />
              {["Undo", "Redo"].map((k) => <SquareButton key={k} aria-label={k}><EditGlyph kind={k} /></SquareButton>)}
              <ToolSpace $w={14} />
              <SquareButton aria-label="Sync-Lock Tracks"><EditGlyph kind="Sync-Lock" /></SquareButton>
              <ToolSpace $w={14} />
              {["plus", "minus", "sel", "fit"].map((k) => <SquareButton key={k} aria-label={`Zoom ${k}`}><Magnifier sign={k} /></SquareButton>)}
            </Dock>
            <Gripper />
            <SquareButton aria-label="Play at speed"><EditGlyph kind="Play" /></SquareButton>
            <ToolSpace $w={4} />
            <Slider label="Playback speed" w={96} value={0.32} />
          </DockRow>
        </DockColumn>
      </Docks>
      <DeviceBar>
        <Dock><Gripper /></Dock>
        <Select label="Audio host" text="MME" w={103} h={23} />
        <MixerIcon $w={25}><Mic /></MixerIcon>
        <Select label="Recording device" text="Stereo Mix (IDT High Defini" w={166} h={23} />
        <Select label="Recording channels" text="2 (Stereo) Recor" w={106} h={23} />
        <MixerIcon $w={26}><Speaker /></MixerIcon>
        <Select label="Playback device" text="Speakers (IDT High Definiti" w={165} h={23} />
        <DeviceEnd />
      </DeviceBar>

      <Timeline />
      <Workspace>
        <TrackArea>
          <Track>
            <TrackPanel>
              <PanelRow>
                <PanelButton aria-label="Close track"><svg width="9" height="9"><path d="m1 1 7 7M8 1 1 8" stroke="#000" strokeWidth="1.500" /></svg></PanelButton>
                <PanelButton $fill>boomboomb<svg width="11" height="6"><path d="M0 0h11L5.500 6z" /></svg></PanelButton>
              </PanelRow>
              <TrackInfo>Stereo, 44100Hz<br />32-bit float</TrackInfo>
              <PanelRow>
                <PanelButton $fill>Mute</PanelButton>
                <PanelButton $fill>Solo</PanelButton>
              </PanelRow>
              <PanelSliders>
                <Slider label="Gain" w={78} value={0.5} />
                <Slider label="Pan" w={78} value={0.5} ends={["L", "R"]} />
              </PanelSliders>
              <CollapseButton aria-label="Collapse"><svg width="12" height="7"><path d="M1 6.500h10L6 1z" fill="#99a" stroke="#000" /></svg></CollapseButton>
            </TrackPanel>
            <ScaleColumn>
              <AmplitudeScale />
              <ScaleGap />
              <AmplitudeScale />
            </ScaleColumn>
            <WaveColumn>
              <Waveform />
              <WaveGap />
              <Waveform />
            </WaveColumn>
          </Track>
        </TrackArea>
        <VScroll>
          <ScrollButton $size={17} aria-label="Scroll up"><Chevron dir="up" weight={2} size={9} /></ScrollButton>
          <ScrollThumb />
          <ScrollButton $size={17} aria-label="Scroll down"><Chevron weight={2} size={9} /></ScrollButton>
        </VScroll>
      </Workspace>
      <HScroll>
        <ScrollButton $size={16} aria-label="Scroll left"><Chevron dir="left" weight={2} size={9} /></ScrollButton>
        <ScrollThumb />
        <ScrollButton $size={16} aria-label="Scroll right"><Chevron dir="right" weight={2} size={9} /></ScrollButton>
      </HScroll>

      <SelectionBar>
        <Gripper />
        <ToolSpace $w={1} />
        <Field $w={101}>
          <FieldHead>Project Rate (Hz):</FieldHead>
          <Select label="Project Rate" text="44100" w={80} h={23} white />
        </Field>
        <Divider />
        <Field $w={79}>
          <FieldHead>Snap To:</FieldHead>
          <Select label="Snap To" text="Off" w={73} h={23} />
        </Field>
        <Field $w={154}>
          <FieldHead>Selection Start:</FieldHead>
          <TimeControl label="Selection Start" value="00h00m43.111s" />
        </Field>
        <Field $w={154}>
          <FieldHead>
            <RadioLabel><Radio type="radio" name="range" defaultChecked />End</RadioLabel>
            <RadioLabel><Radio type="radio" name="range" />Length</RadioLabel>
          </FieldHead>
          <TimeControl label="Selection End" value="00h00m44.634s" />
        </Field>
        <Divider />
        <Field $w={154}>
          <FieldHead>Audio Position:</FieldHead>
          <TimeControl label="Audio Position" value="00h00m00.000s" />
        </Field>
      </SelectionBar>
      <StatusBar>
        <StatusCell $w={138}>Stopped.</StatusCell>
        <StatusCell />
        <StatusCell $w={175}>Actual Rate: 44100</StatusCell>
      </StatusBar>

      <Taskbar>
        <TaskButton $w={48} aria-label="Start">
          <svg width="17" height="17" fill="#fff"><path d="M0 2.500 7 1.500V8H0zM8 1.300 17 0v8H8zM0 9h7v6.500L0 14.500zM8 9h9v8l-9-1.300z" /></svg>
        </TaskButton>
        <SearchBox>
          <svg width="23" height="23"><circle cx="11.500" cy="11.500" r="9" fill="none" stroke="#fff" strokeWidth="3" /></svg>
          <SearchInput placeholder="Ask me anything" />
          <svg width="13" height="18" fill="none" stroke="#aaa"><rect x="4" y="1" width="5" height="10" rx="1" /><path d="M1.500 8v5.500h10V8M6.500 13.500v3M4 17h5" /></svg>
        </SearchBox>
        <TaskButton $w={48} aria-label="Task View">
          <svg width="20" height="16" fill="none" stroke="#fff"><rect x="5" y="1.500" width="10" height="13" /><path d="M3 3.500H.5v9H3M17 3.500h2.500v9H17" /></svg>
        </TaskButton>
        <TaskButton $w={53} aria-label="Edge">
          <svg width="22" height="22" viewBox="0 0 22 22"><path d="M1 10C2 3.500 6.500 1 11 1c6 0 9.500 4 9.500 9v2.500h-13c.3 6 7.500 6 12 3.300V20c-8 4-17 .5-17-7C2.500 9.500 5 7 7.500 6 6 7.500 7.500 9 7.500 9h7.500c0-6-9.500-5.500-14 1z" fill="#0f7fdc" /></svg>
        </TaskButton>
        <TaskButton $w={46} aria-label="Store">
          <svg width="22" height="24" viewBox="0 0 22 24"><path d="M1 7.500 21 6v17L1 20.500z" fill="#fff" /><path d="M7 8V5q0-3.500 3.500-3.500T14 5v2.500" fill="none" stroke="#fff" strokeWidth="1.500" /><path d="m5 10.500 4.500-.5v4H5zM10.500 9.900 17 9.200V14h-6.500zM5 15h4.500v4L5 18.500zM10.500 15H17v5l-6.500-.8z" fill="#02060b" /></svg>
        </TaskButton>
        <ToolSpace $w={6} />
        <TaskButton $w={40} $run aria-label="File Explorer">
          <svg width="22" height="19" viewBox="0 0 22 19"><path d="M0 1h8l1.500 2H22v15H0z" fill="#f8d775" /><path d="M0 4h22v14H0z" fill="#ffe594" /><path d="M4 18v-8q0-1 1-1h12q1 0 1 1v8h-4v-4H8v4z" fill="#32b1e8" /></svg>
        </TaskButton>
        <ToolSpace $w={5} />
        <TaskButton $w={48} $run $on aria-label="Audacity"><Logo size={22} /></TaskButton>
        <Tray>
          <TrayButton $w={24} aria-label="Show hidden icons"><svg width="13" height="8"><path d="M1 7 6.500 1.500 12 7" fill="none" stroke="#fff" strokeWidth="1.200" /></svg></TrayButton>
          <TrayButton $w={24} aria-label="Battery"><svg width="16" height="10" fill="none" stroke="#fff"><path d="M.5.5h13v9H.5zM15 3v4" /><path d="M2.500 2.500h7v5h-7z" fill="#fff" /></svg></TrayButton>
          <TrayButton $w={24} aria-label="Wi-Fi"><svg width="14" height="14" fill="none" stroke="#fff"><path d="M1.500 13A12 12 0 0 1 12 1M4.500 13A9 9 0 0 1 12.500 4.500M7.500 13A6 6 0 0 1 13 7.500" strokeWidth="1.100" /><circle cx="11" cy="11.500" r="1" fill="#fff" /></svg></TrayButton>
          <TrayButton $w={24} aria-label="Volume">
            <svg width="17" height="14" fill="none" stroke="#fff"><path d="M.5 5v4h2.500L6.500 12V2L3 5z" /><path d="M9 5q1.500 2 0 4M11 3.500q2.500 3.500 0 7M13.500 1.500q3.500 5.500 0 11" /></svg>
          </TrayButton>
          <Clock>12:36<br />16/10/2016</Clock>
          <NotifyButton $w={50} aria-label="Notifications">
            <svg width="18" height="17" viewBox="0 0 18 17"><path d="M1 0h15v12h-5l-4 4v-4H1z" fill="#fff" /><path d="M3.500 3.500h10M3.500 6.500h10M3.500 9.500h5" stroke="#02060b" /><circle cx="13" cy="12" r="3.500" fill="#02060b" /><circle cx="13" cy="12" r="2.500" fill="none" stroke="#fff" /></svg>
          </NotifyButton>
          <ShowDesktop />
        </Tray>
      </Taskbar>
      <FrequencyWindow />
    </Screen>
  );
}
